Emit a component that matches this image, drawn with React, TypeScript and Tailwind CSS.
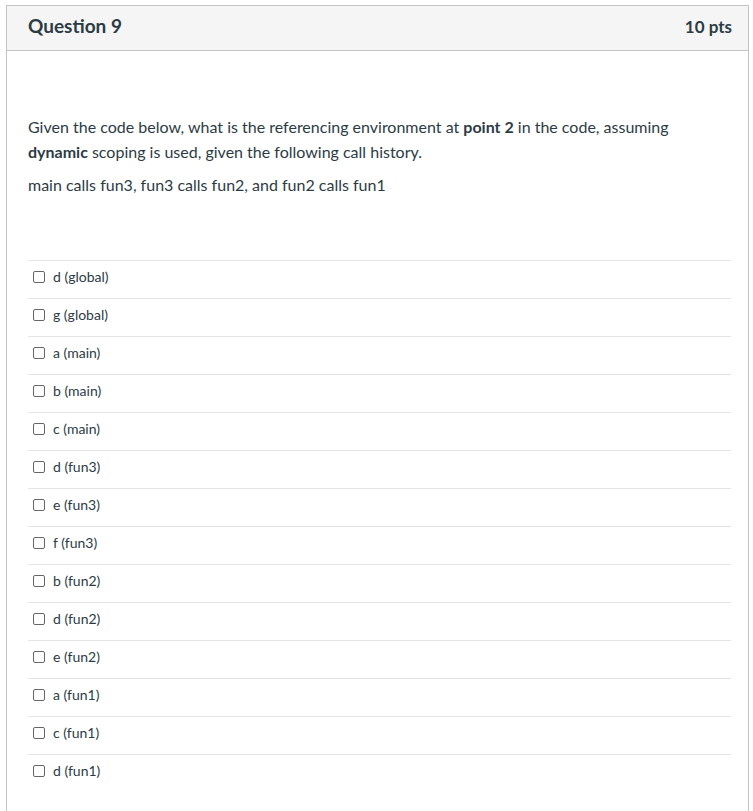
const answers = [
  "d (global)",
  "g (global)",
  "a (main)",
  "b (main)",
  "c (main)",
  "d (fun3)",
  "e (fun3)",
  "f (fun3)",
  "b (fun2)",
  "d (fun2)",
  "e (fun2)",
  "a (fun1)",
  "c (fun1)",
  "d (fun1)",
];

function Answer({ label }: { label: string }) {
  return (
    <label className="flex h-[38px] items-center border-t border-[#e2e4e6] pl-[5px] pb-[6px] cursor-pointer">
      <span className="block h-[12px] w-[12px] shrink-0 rounded-[2px] border border-[#666] bg-white" />
      <span className="ml-[8px] text-[14px] text-[#2d3b45]">{label}</span>
    </label>
  );
}

export default function App() {
  return (
    <div
      className="min-h-[811px] bg-white pt-[5px] pl-[6px]"
      style={{ fontFamily: "Lato, 'Liberation Sans', sans-serif" }}
    >
      <div className="w-[743px] min-h-[806px] border border-b-0 border-[#c0c4c7]">
        <div className="flex h-[45px] items-center justify-between border-b border-[#c0c4c7] bg-[#f5f5f5] pl-[21px] pr-[16px] pb-[3px]">
          <h2 className="text-[19px] font-bold text-[#2d3b45]">Question 9</h2>
          <span className="text-[17px] font-bold text-[#2d3b45]">10 pts</span>
        </div>

        <div className="px-[21px] pt-[63px] text-[#2d3b45]">
          <p className="text-[16px] leading-[25px]">
            Given the code below, what is the referencing environment at <b>point 2</b> in the
            code, assuming <b>dynamic</b> scoping is used, given the following call history.
          </p>
          <p className="mt-[8px] text-[16px] leading-[25px]">
            main calls fun3, fun3 calls fun2, and fun2 calls fun1
          </p>

          <div className="mt-[63px] mr-[-4px]">
            {answers.map((a) => (
              <Answer key={a} label={a} />
            ))}
          </div>
        </div>
      </div>
    </div>
  );
}
